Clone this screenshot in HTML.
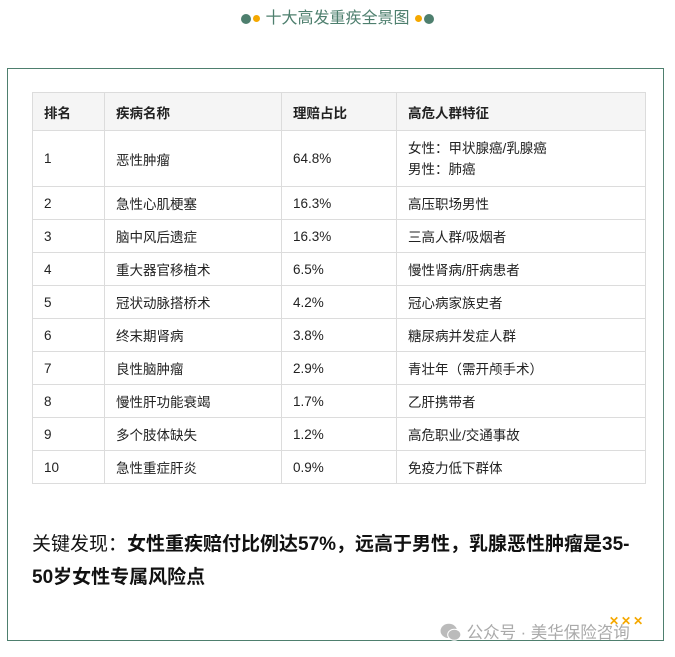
<!DOCTYPE html>
<html><head><meta charset="utf-8"><style>
body{margin:0;width:675px;height:657px;background:#fff;font-family:"Liberation Sans","Noto Sans CJK SC",sans-serif;position:relative;overflow:hidden}
.title{position:absolute;top:8px;left:0;width:675px;text-align:center;font-size:16px;color:#4e7f6e;line-height:22px}
.dot{display:inline-block;border-radius:50%;vertical-align:middle;margin:0 1px}
.box{position:absolute;left:7px;top:68px;width:657px;height:573px;border:1px solid #4e7f6e;box-sizing:border-box}
table{position:absolute;left:32px;top:92px;border-collapse:collapse;font-size:13.5px;color:#222}
td,th{border:1px solid #dcdcdc;padding:0 0 0 11px;text-align:left;height:32px}
th{background:#f5f5f5;font-weight:bold;height:37px}
.key{position:absolute;left:32px;top:528px;width:615px;font-size:19px;line-height:33px;color:#111}
.wm{position:absolute;left:440px;top:619px;font-size:16.5px;color:#aaa}
</style></head><body>
<div class="title"><span class="dot" style="width:10px;height:10px;background:#4e7f6e"></span><span class="dot" style="width:7px;height:7px;background:#f5a800"></span> 十大高发重疾全景图 <span class="dot" style="width:7px;height:7px;background:#f5a800"></span><span class="dot" style="width:10px;height:10px;background:#4e7f6e"></span></div>
<div class="box"></div>
<table>
<colgroup><col style="width:72px"><col style="width:177px"><col style="width:115px"><col style="width:249px"></colgroup>
<tr><th>排名</th><th>疾病名称</th><th>理赔占比</th><th>高危人群特征</th></tr>
<tr><td style="height:55px">1</td><td>恶性肿瘤</td><td>64.8%</td><td style="line-height:21px">女性：甲状腺癌/乳腺癌<br>男性：肺癌</td></tr>
<tr><td>2</td><td>急性心肌梗塞</td><td>16.3%</td><td>高压职场男性</td></tr>
<tr><td>3</td><td>脑中风后遗症</td><td>16.3%</td><td>三高人群/吸烟者</td></tr>
<tr><td>4</td><td>重大器官移植术</td><td>6.5%</td><td>慢性肾病/肝病患者</td></tr>
<tr><td>5</td><td>冠状动脉搭桥术</td><td>4.2%</td><td>冠心病家族史者</td></tr>
<tr><td>6</td><td>终末期肾病</td><td>3.8%</td><td>糖尿病并发症人群</td></tr>
<tr><td>7</td><td>良性脑肿瘤</td><td>2.9%</td><td>青壮年（需开颅手术）</td></tr>
<tr><td>8</td><td>慢性肝功能衰竭</td><td>1.7%</td><td>乙肝携带者</td></tr>
<tr><td>9</td><td>多个肢体缺失</td><td>1.2%</td><td>高危职业/交通事故</td></tr>
<tr><td>10</td><td>急性重症肝炎</td><td>0.9%</td><td>免疫力低下群体</td></tr>
</table>
<div class="key">关键发现：<b>女性重疾赔付比例达57%，远高于男性，乳腺恶性肿瘤是35-<br>50岁女性专属风险点</b></div>
<div class="wm"><svg width="22" height="18" viewBox="0 0 20 16" style="vertical-align:-3px"><ellipse cx="8" cy="7" rx="7.5" ry="6.5" fill="#bbb"/><ellipse cx="13" cy="10.5" rx="6" ry="5" fill="#bbb" stroke="#fff" stroke-width="1"/></svg> 公众号 · 美华保险咨询</div>
<div style="position:absolute;left:609px;top:614px;color:#f5a800;font-size:12px;font-weight:bold;letter-spacing:2px">✕✕✕</div>
</body></html>
